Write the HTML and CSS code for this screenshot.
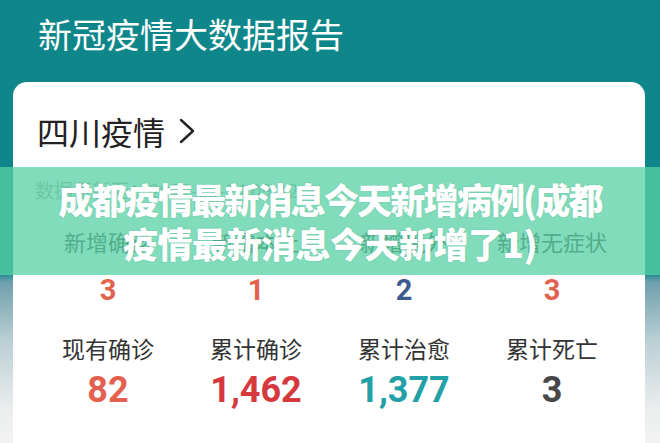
FILE: index.html
```html
<!DOCTYPE html>
<html lang="zh-CN">
<head>
<meta charset="utf-8">
<title>新冠疫情大数据报告</title>
<link rel="stylesheet" href="styles.css">
</head>
<body>
<div class="page">
  <header class="top">
    <h1 class="top-title">新冠疫情大数据报告</h1>
  </header>

  <main class="card">
    <h2 class="region">四川疫情
      <svg class="chev" width="16" height="26" viewBox="0 0 16 26" aria-hidden="true">
        <polyline points="2,2 14,13 2,24" fill="none" stroke="#222" stroke-width="2.4" stroke-linecap="round" stroke-linejoin="round"/>
      </svg>
    </h2>
    <p class="updated">数据更新至：2022-09-24 09:12</p>

    <section class="stats stats-new">
      <div class="stat"><span class="label">新增确诊</span><span class="num orange">3</span></div>
      <div class="stat"><span class="label">新增本土</span><span class="num orange">1</span></div>
      <div class="stat"><span class="label">新增境外</span><span class="num navy">2</span></div>
      <div class="stat"><span class="label">新增无症状</span><span class="num orange">3</span></div>
    </section>

    <section class="stats stats-total">
      <div class="stat"><span class="label">现有确诊</span><span class="num coral">82</span></div>
      <div class="stat"><span class="label">累计确诊</span><span class="num red">1,462</span></div>
      <div class="stat"><span class="label">累计治愈</span><span class="num teal">1,377</span></div>
      <div class="stat"><span class="label">累计死亡</span><span class="num gray">3</span></div>
    </section>
  </main>

  <div class="banner">
    <p class="banner-line banner-line-first">成都疫情最新消息今天新增病例(成都</p>
    <p class="banner-line">疫情最新消息今天新增了1)</p>
  </div>
</div>
</body>
</html>
```

FILE: styles.css
```css
* { box-sizing: border-box; }

html, body {
  margin: 0;
  padding: 0;
  height: 100%;
  overflow: hidden;
}

body {
  font-family: "Noto Sans CJK SC", "Noto Sans", sans-serif;
  background: linear-gradient(to bottom,
    #0f878a 0px,
    #0f878a 272px,
    #6f9fac 282px,
    #b9cfd4 340px,
    #eceeee 410px,
    #f2f2f2 443px);
}

.page {
  position: relative;
  width: 660px;
  height: 443px;
}

.top {
  height: 82px;
  padding: 12px 0 0 38px;
}

.top-title {
  margin: 0;
  font-size: 34px;
  font-weight: 400;
  line-height: 44px;
  color: #ffffff;
}

.card {
  margin: 0 15px 0 13px;
  height: 400px;
  background: #ffffff;
  border-radius: 14px 14px 0 0;
  padding: 29px 19px 0 21px;
}

.region {
  margin: 0 0 0 3px;
  font-size: 32px;
  font-weight: 400;
  line-height: 40px;
  color: #222222;
  display: flex;
  align-items: center;
  gap: 14px;
}

.chev { display: block; }

.updated {
  margin: 26px 0 0 1px;
  font-size: 19px;
  line-height: 26px;
  color: #a9a9a9;
}

.stats {
  display: grid;
  grid-template-columns: repeat(4, 148px);
}

.stats-new { margin-top: 23px; }
.stats-total { margin-top: 25px; }

.stat {
  display: flex;
  flex-direction: column;
  align-items: center;
}

.label {
  font-size: 22px;
  line-height: 30px;
  color: #333333;
}

.stats-new .label { color: #3a3a3a; }

.stats-total .label { font-size: 23px; }

.num {
  font-family: Roboto, "Liberation Sans", sans-serif;
  font-weight: 700;
}

.stats-new .num {
  margin-top: 16px;
  font-size: 29px;
  line-height: 36px;
}

.stats-total .num {
  margin-top: 5px;
  font-size: 36px;
  line-height: 44px;
}

.orange { color: #e2634d; }
.navy { color: #3c5a8e; }
.coral { color: #e5614f; }
.red { color: #d5383d; }
.teal { color: #23a0a6; }
.gray { color: #474747; }

/* translucent caption strip laid over the card */
.banner {
  position: absolute;
  left: 0;
  right: 0;
  top: 167px;
  height: 108px;
  background: rgba(88, 209, 164, 0.76);
  display: flex;
  flex-direction: column;
  align-items: center;
  justify-content: center;
}

.banner-line {
  margin: 0;
  font-size: 35px;
  font-weight: 900;
  line-height: 44px;
  color: #ffffff;
  letter-spacing: -0.5px;
  text-shadow: 0 0 2px rgba(0, 0, 0, 0.12);
}

.banner-line-first {
  letter-spacing: -1.8px;
}
```
